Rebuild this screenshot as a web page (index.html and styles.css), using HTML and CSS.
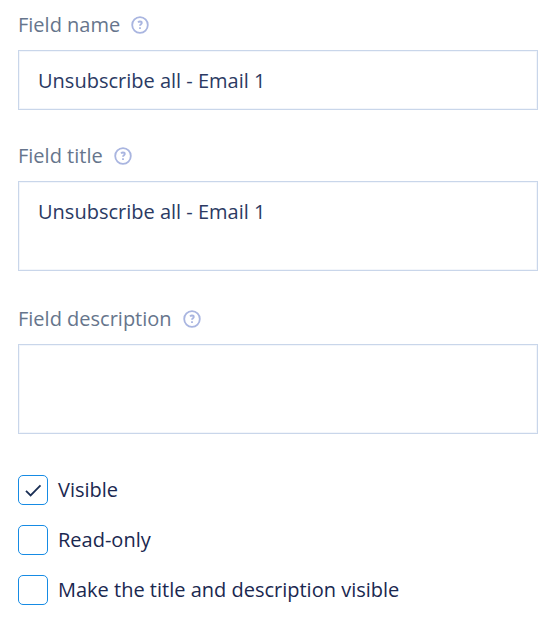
FILE: index.html
```html
<!DOCTYPE html>
<html lang="en">
<head>
    <meta charset="UTF-8">
    <meta name="viewport" content="width=device-width, initial-scale=1.0">
    <title>Field settings</title>
    <link rel="stylesheet" href="styles.css">
</head>
<body>
    <form class="settings">
        <div class="field">
            <div class="field-header">
                <label for="field-name">Field name</label>
                <button type="button" class="help" aria-label="Help: field name">
                    <svg viewBox="0 0 18 18" width="18" height="18">
                        <circle cx="9" cy="9" r="7.8"/>
                        <path d="M7 6.4C7.6 5.8 8.3 5.5 9 5.5c1.1 0 1.8.5 1.8 1.4 0 1.3-1.8 1.4-1.8 2.9M9 11.2v1.8"/>
                    </svg>
                </button>
            </div>
            <input type="text" id="field-name" class="text-box" value="Unsubscribe all - Email 1">
        </div>

        <div class="field">
            <div class="field-header">
                <label for="field-title">Field title</label>
                <button type="button" class="help" aria-label="Help: field title">
                    <svg viewBox="0 0 18 18" width="18" height="18">
                        <circle cx="9" cy="9" r="7.8"/>
                        <path d="M7 6.4C7.6 5.8 8.3 5.5 9 5.5c1.1 0 1.8.5 1.8 1.4 0 1.3-1.8 1.4-1.8 2.9M9 11.2v1.8"/>
                    </svg>
                </button>
            </div>
            <textarea id="field-title" class="text-box text-area">Unsubscribe all - Email 1</textarea>
        </div>

        <div class="field">
            <div class="field-header">
                <label for="field-description">Field description</label>
                <button type="button" class="help" aria-label="Help: field description">
                    <svg viewBox="0 0 18 18" width="18" height="18">
                        <circle cx="9" cy="9" r="7.8"/>
                        <path d="M7 6.4C7.6 5.8 8.3 5.5 9 5.5c1.1 0 1.8.5 1.8 1.4 0 1.3-1.8 1.4-1.8 2.9M9 11.2v1.8"/>
                    </svg>
                </button>
            </div>
            <textarea id="field-description" class="text-box text-area"></textarea>
        </div>

        <div class="options">
            <label class="option"><input type="checkbox" checked>Visible</label>
            <label class="option"><input type="checkbox">Read-only</label>
            <label class="option"><input type="checkbox">Make the title and description visible</label>
        </div>
    </form>
</body>
</html>
```

FILE: styles.css
```css
* {
    box-sizing: border-box;
}
body {
    background-color: #fff;
    font-family: "Open Sans", "Noto Sans", sans-serif;
    font-size: 20px;
    line-height: 30px;
    margin: 0;
}
.settings {
    display: flex;
    flex-direction: column;
    gap: 31px;
    padding: 10px 18px;
}
.field-header {
    display: flex;
    align-items: center;
    gap: 11px;
    margin-bottom: 10px;
    color: #66758c;
}
.help {
    display: flex;
    padding: 0;
    border: none;
    background: none;
    cursor: pointer;
}
.help svg {
    fill: none;
    stroke: #a9b5e0;
    stroke-width: 1.8;
}
.text-box {
    display: block;
    width: 100%;
    height: 60px;
    padding: 14px 19px;
    border: 1px solid #c9d6ea;
    border-radius: 0;
    background-color: #fff;
    box-shadow: inset 0 0 0 1px #f3f6fb;
    color: #2b3a63;
    font: inherit;
}
.text-area {
    height: 90px;
    margin-bottom: 2px;
    padding-top: 15px;
    resize: none;
}
.options {
    display: flex;
    flex-direction: column;
    gap: 20px;
    margin-top: 8px;
}
.option {
    display: flex;
    align-items: center;
    gap: 10px;
    color: #1a2850;
}
.option input {
    appearance: none;
    flex: none;
    width: 30px;
    height: 30px;
    margin: 0;
    border: 1px solid #168be4;
    border-radius: 5px;
}
.option input:checked {
    background: url("data:image/svg+xml,%3Csvg xmlns='http://www.w3.org/2000/svg' viewBox='0 0 28 28' fill='none' stroke='%231a2f55' stroke-width='1.8'%3E%3Cpath d='M7 14.8l4.6 4.6L21.5 9.3'/%3E%3C/svg%3E") center / 28px no-repeat;
}
```
